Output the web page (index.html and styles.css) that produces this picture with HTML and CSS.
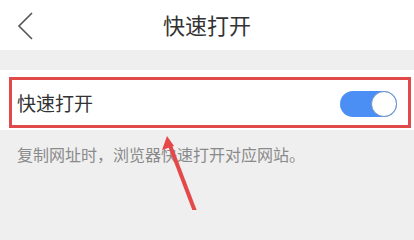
FILE: index.html
```html
<!DOCTYPE html>
<html lang="zh">
<head>
<meta charset="utf-8">
<link rel="stylesheet" href="styles.css">
</head>
<body>
<div class="page">
  <header class="header">
    <div class="back">
      <svg width="20" height="28" viewBox="0 0 20 28"><path d="M17 1 L4 14 L17 27" fill="none" stroke="#555" stroke-width="1.6"/></svg>
    </div>
    <div class="title">快速打开</div>
    <div></div>
  </header>
  <div class="spacer"></div>
  <div class="row">
    <div class="box">
      <span class="label">快速打开</span>
      <span class="toggle"><span class="knob"></span></span>
    </div>
  </div>
  <p class="desc">复制网址时，浏览器快速打开对应网站。</p>
  <svg class="arrow" width="414" height="210" viewBox="0 0 414 210">
    <line x1="169" y1="143" x2="196" y2="214" stroke="#e54848" stroke-width="4"/>
    <polygon points="167,136 162,150 174,146" fill="#e54848"/>
  </svg>
</div>
</body>
</html>
```
FILE: styles.css
```css
html, body {
  margin: 0;
  padding: 0;
}
body {
  background: #efeff0;
  font-family: "Noto Sans CJK SC", "Noto Sans", sans-serif;
  width: 414px;
  height: 210px;
  overflow: hidden;
}
.page {
  position: relative;
  width: 414px;
  height: 210px;
}
.header {
  height: 50px;
  background: #fff;
  display: grid;
  grid-template-columns: 1fr auto 1fr;
  align-items: center;
}
.back {
  padding-left: 15px;
  display: flex;
  align-items: center;
  padding-top: 2px;
}
.title {
  font-size: 22px;
  color: #333;
  line-height: 1;
  padding-bottom: 2px;
}
.spacer {
  height: 20px;
}
.row {
  background: #fff;
  height: 60px;
  padding: 7px 3px 0 9px;
  box-sizing: border-box;
}
.box {
  border: 3px solid #e04a4a;
  height: 51px;
  box-sizing: border-box;
  display: flex;
  align-items: center;
  justify-content: space-between;
  padding: 0 11px 0 5px;
}
.label {
  font-size: 19px;
  color: #333;
  line-height: 1;
  padding-bottom: 1px;
}
.toggle {
  width: 57px;
  height: 26px;
  border-radius: 13px;
  background: #4b8ff4;
  display: flex;
  justify-content: flex-end;
  margin-top: 2px;
}
.knob {
  width: 26px;
  height: 26px;
  border-radius: 50%;
  background: #fff;
  border: 1.5px solid #6f93c8;
  box-sizing: border-box;
}
.desc {
  margin: 0;
  padding: 14px 0 0 17px;
  font-size: 16px;
  line-height: 20px;
  color: #8a8a8a;
}
.arrow {
  position: absolute;
  left: 0;
  top: 0;
  pointer-events: none;
}
```
